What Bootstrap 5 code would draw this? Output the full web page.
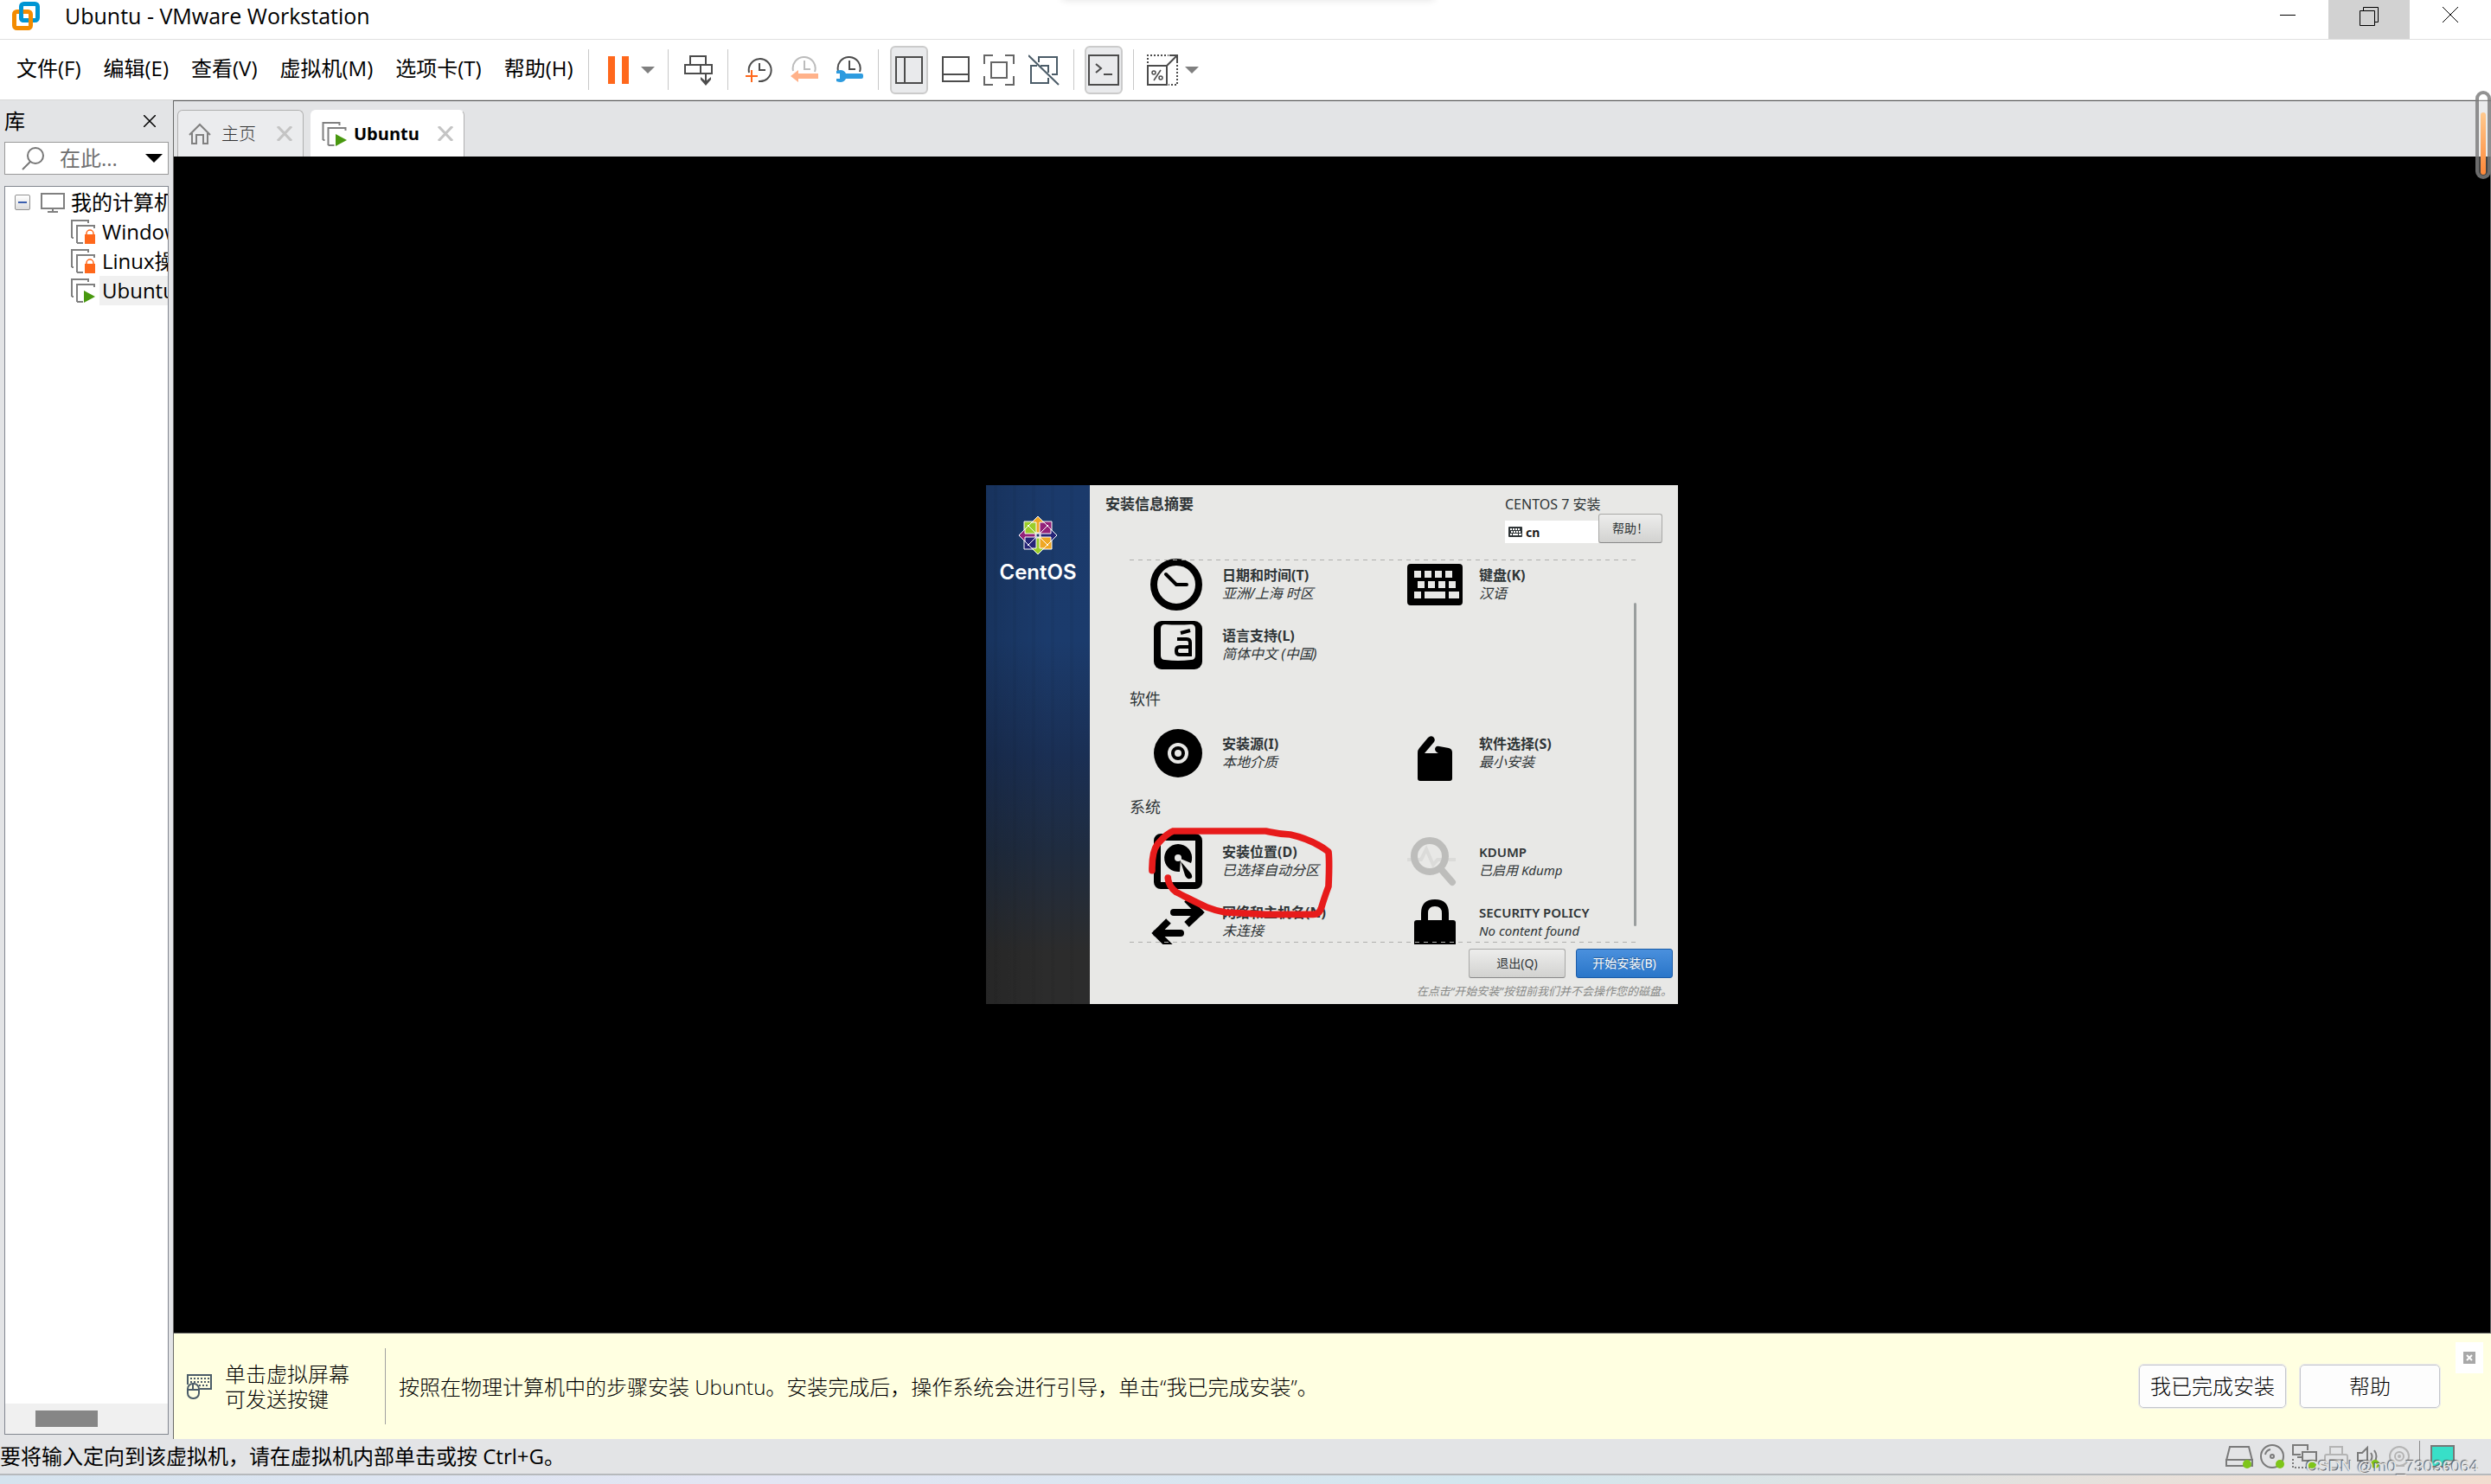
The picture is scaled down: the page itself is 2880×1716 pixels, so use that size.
<!DOCTYPE html>
<html lang="zh-CN">
<head>
<meta charset="utf-8">
<meta name="viewport" content="width=device-width, initial-scale=1">
<title>Ubuntu - VMware Workstation</title>
<link rel="stylesheet" href="https://cdn.jsdelivr.net/npm/bootstrap@5.3.0/dist/css/bootstrap.min.css">
<style>
:root{--ui:"Open Sans","Noto Sans CJK SC",sans-serif;--chrome:#e3e4e6}
body{font-family:var(--ui);font-size:24px;line-height:34px;color:#000;background:#fff}
button{font-family:inherit;color:inherit}
svg{display:block;flex:none}
.plain{border:0;background:none;padding:0;line-height:inherit}
.titlebar{height:45px;padding-left:14px}
.titlebar h1{font-size:25px;line-height:36px;font-weight:400}
.app-logo{margin-top:2px}
.wbtn{width:94px;height:45px;display:flex;justify-content:center;padding-top:8px}
.wbtn.on{background:#d2d2d2}
.notch{left:50%;top:-8px;width:430px;height:6px;margin-left:-212px;box-shadow:0 2px 8px #0002}
.menubar{height:71px;border-top:1px solid #e0e0e0;border-bottom:1px solid #d8d8d8;padding-left:19px;color:#000}
.menus{gap:26px;margin-right:17px;padding-bottom:3px}
.vsep{width:1px;height:47px;background:#c8c8c8;flex:none}
.status .vsep{height:36px;background:#8a8a8a}
.tbtn{height:56px;display:flex;align-items:center;justify-content:center}
.tbtn.on{background:#e9eaec;border:2px solid #cbcbcb;border-radius:6px;width:44px}
.g-power{padding:0 15px 0 22px;gap:14px}
.g-send{padding:0 17px 0 18px}
.g-snap{padding:0 17px 0 20px;gap:20px}
.g-view{padding:0 16px 0 13px;gap:16px}
.g-con{padding:0 12px}
.g-fit{padding-left:15px;gap:8px}
.lib{width:200px;background:var(--chrome);padding:0 5px}
.lib-head{height:48px;padding-right:15px}
.find{height:38px;border:1px solid #999;background:#fff;padding:0 7px 0 19px;gap:17px}
.find input{border:0;outline:0;padding:0;width:82px;color:#666;background:none;line-height:34px}
.find input::placeholder{color:#707070;opacity:1}
.tree{border:1px solid #828790;background:#fff;margin-top:13px;margin-bottom:5px;padding-top:1px;overflow:hidden}
.tree-row{height:34px;white-space:nowrap;padding-left:76px;gap:5px}
.tree-row.root{padding-left:11px;gap:12px}
.tree-row.root span{margin-left:-8px}
.tree-row span{padding-left:3px;flex-grow:1;line-height:34px}
.tree-row.sel span{background:#f0f0f0}
.expander{width:18px;height:18px;flex:none;border:1px solid #919191;border-radius:2px;background:linear-gradient(#fff,#ddd)}
.expander i{width:10px;height:2px;background:#3b5fae}
.hbar{height:35px;background:#f0f0f0;padding:8px 0 0 35px}
.hbar i{display:block;width:72px;height:19px;background:#868686}
.stage{border-left:1px solid #6a6a6a;border-top:1px solid #5a5a5a;min-width:0}
.tabstrip{height:64px;background:var(--chrome);padding:10px 0 0 4px;gap:8px}
.vtab{height:54px;border:1px solid #b0b0b0;border-bottom:0;border-radius:6px 6px 0 0;background:#ebecee;padding:0 12px 0 12px}
.vtab.live{background:#fff;border-color:#fff #b0b0b0 #fff #fff}
.vtab .cap{font-size:20px;margin:0 24px 0 12px;font-weight:300;color:#333}
.vtab.live .cap{margin:0 21px 0 8px;font-weight:700;color:#000}
.screen{background:#000;border-right:1px solid #6a6a6a}
.hint{height:123px;background:#ffffe1;border-top:1px solid #666;padding:0 9px 0 15px;font-weight:300}
.hint p{line-height:29px}
.hint .say{margin-left:15px}
.hint .bar{width:1px;height:88px;background:#a0a0a0;margin:0 15px 0 41px}
.hbtn{height:50px;border:1px solid #c4c6cc;outline:1px solid #ececec;border-radius:5px;background:#fdfdfd;font-weight:300;padding:0 12px}
.hbtn.wide{width:162px}
.xbox{width:32px;height:36px;background:#fff;border:0;padding:0;margin:10px 0 0 18px}
.status{height:42px;background:var(--chrome);border-bottom:2px solid #b6b9bc;padding-right:41px}
.status .tray{gap:8px}
.desk{height:10px;background:linear-gradient(90deg,#d5e3ee,#e3e5f3 30%,#d2e6ee 60%,#f2ddd0)}
.stamp{right:14px;bottom:9px;font-size:19px;line-height:22px;font-family:"Liberation Sans",sans-serif;color:#e8e8e8;text-shadow:-1px -1px 1px #555}
.pill{right:0;top:105px;width:18px;height:102px;border:4px solid #777c;border-radius:9px;background:#fff4;padding:21px 2px 1px}
.pill i{display:block;height:72px;border-radius:3px;background:linear-gradient(#ffc98e,#ff8838)}
/* installer */
.inst{width:800px;height:600px;background:#e8e8e6;color:#2e3436;font-family:"Noto Sans","Noto Sans CJK SC",sans-serif;font-size:16px;line-height:21px}
.inst-side{width:120px;background:repeating-linear-gradient(90deg,#0000 0 9px,#0000000a 9px 13px,#0000 13px 22px),linear-gradient(90deg,#0002,#0000 60%),linear-gradient(#1b3a6b,#1b3b6c 30%,#1a2f54 52%,#1f2c40 70%,#2c2c2c 90%);padding-top:35px;color:#fff}
.logo-word{font:600 24px/30px Inter,sans-serif;margin-top:5px}
.inst-top{height:85px;padding:11px 18px 0 18px}
.inst-top h2{font-size:17px;line-height:22px;font-weight:700;margin:0}
.inst-top .rel{line-height:22px}
.kb{width:108px;height:26px;background:#fff;border:0;padding:0 4px;gap:4px;font-size:14px;font-weight:700;color:#1c1c1c}
.gbtn{height:34px;border:1px solid #a8a8a6;border-bottom-color:#888;border-radius:3px;background:linear-gradient(#ededec,#d2d2d0);font-size:14px;line-height:20px;padding:0;color:#2e3436}
.gbtn.w1{width:74px}.gbtn.w2{width:112px}
.gbtn.go{background:linear-gradient(#4a90dd,#2a76c9);border-color:#1b5ba6;color:#fff;text-shadow:0 -1px 1px #0005}
.hub{width:586px;height:446px;margin-left:46px;overflow:hidden}
.hub::before,.hub::after{content:"";position:absolute;left:0;right:0;height:1px;background:repeating-linear-gradient(90deg,#b0b0ae 0 5px,#0000 5px 10px)}
.hub::before{top:1px}.hub::after{bottom:2px}
.hub-list{margin-top:-5px}
.hub h3{height:55px;font-size:18px;line-height:55px;font-weight:400;margin:0}
.spoke{width:297px;height:70px;flex:none;text-align:left;color:#2e3436}
.spoke .pic{width:107px;display:flex;justify-content:center}
.spoke .pic svg{margin-left:5px;overflow:visible}
.spoke b,.spoke em{display:block;line-height:21px}
.spoke b{font-weight:700}
.spoke .lat{font-weight:600;font-size:15px}
.spoke em.lat{font-weight:400}
.thumb{right:0;top:51px;width:3px;height:374px;border-radius:2px;background:#9a9e9e}
.inst-foot{padding:5px 6px 0 0}
.inst-foot .acts{gap:12px}
.inst-foot p{font-size:13px;line-height:20px;font-style:italic;color:#888a88;margin:5px 1px 0 0}
</style>
</head>
<body class="min-vh-100 d-flex flex-column position-relative overflow-hidden">
<svg width="0" height="0" class="position-absolute" aria-hidden="true">
<defs>
<symbol id="vm" viewBox="0 0 28 28"><path d="M1 21V1h19v3M7 27V7h20v3M1 21h2M7 27h7" fill="none" stroke="#808080" stroke-width="2"/></symbol>
<symbol id="kbd" viewBox="0 0 64 48"><path fill-rule="evenodd" d="M4 0h56a4 4 0 0 1 4 4v40a4 4 0 0 1-4 4H4a4 4 0 0 1-4-4V4a4 4 0 0 1 4-4zM8 8v8h8V8zm12 0v8h8V8zm12 0v8h8V8zm12 0v8h8V8zM12 20v8h8v-8zm12 0v8h8v-8zm12 0v8h8v-8zm12 0v8h8v-8zM8 32v8h8v-8zm12 0v8h24v-8zm28 0v8h12v-8z"/></symbol>
</defs>
</svg>

<header class="titlebar d-flex">
  <svg class="app-logo" width="33" height="33" viewBox="0 0 33 33"><rect x="10.500" y="2.500" width="19" height="19" rx="3" fill="none" stroke="#0095d3" stroke-width="5"/><rect x="2.500" y="11.500" width="19" height="19" rx="3" fill="none" stroke="#f38b00" stroke-width="5"/><path d="M10.500 9v10q0 2.500 2.500 2.500h5" fill="none" stroke="#0095d3" stroke-width="4.500"/></svg>
  <h1 class="mb-0 ms-4 ps-1">Ubuntu - VMware Workstation</h1>
  <div class="d-flex ms-auto">
    <button class="plain wbtn" aria-label="最小化"><svg width="18" height="18"><path d="M0 9.500h18" stroke="#000"/></svg></button>
    <button class="plain wbtn on" aria-label="还原"><svg width="22" height="22"><path d="M4.500 4V.5h17v17H18M.5 4.500h17v17H.5z" fill="none" stroke="#000"/></svg></button>
    <button class="plain wbtn" aria-label="关闭"><svg width="18" height="18"><path d="M0 0l18 18M18 0L0 18" stroke="#000"/></svg></button>
  </div>
</header>
<div class="notch position-absolute"></div>

<nav class="menubar d-flex align-items-center">
  <div class="menus d-flex">
    <button class="plain">文件(F)</button><button class="plain">编辑(E)</button><button class="plain">查看(V)</button><button class="plain">虚拟机(M)</button><button class="plain">选项卡(T)</button><button class="plain">帮助(H)</button>
  </div>
  <div class="vsep"></div>
  <div class="d-flex g-power">
    <button class="plain tbtn" aria-label="挂起"><svg width="24" height="32"><path d="M0 0h8v32H0zM16 0h8v32h-8z" fill="#ff681c"/></svg></button>
    <button class="plain tbtn" aria-label="电源菜单"><svg width="16" height="8"><path d="M0 0h16l-8 8z" fill="#808080"/></svg></button>
  </div>
  <div class="vsep"></div>
  <div class="d-flex g-send">
    <button class="plain tbtn" aria-label="发送按键"><svg width="33" height="36" fill="none" stroke="#4c4c4c" stroke-width="2"><path d="M7 12V2h18v10M1 12h31v10H1zM19 12v10M25 22v11"/><path d="M19 26l6 5 6-5v3l-6 7-6-7z" fill="#4c4c4c" stroke="none"/></svg></button>
  </div>
  <div class="vsep"></div>
  <div class="d-flex g-snap">
    <button class="plain tbtn" aria-label="快照"><svg width="32" height="32" fill="none" stroke="#4c4c4c" stroke-width="2"><path d="M4 19A13 13 0 1 1 15 29M16 8v8h7"/><path d="M0 23h14M7 16v14" stroke="#ff681c"/></svg></button>
    <button class="plain tbtn" aria-label="恢复快照"><svg width="32" height="32" fill="none" stroke="#bcbcbc" stroke-width="2"><path d="M3 17A13 13 0 1 1 28 18M16 5v10h7"/><path d="M0 23l9-7v4h23v6H9v4z" fill="#ffb28a" stroke="none"/></svg></button>
    <button class="plain tbtn" aria-label="快照管理器"><svg width="32" height="32" fill="none" stroke="#4c4c4c" stroke-width="2"><path d="M3 17A13 13 0 1 1 28 18M16 5v10h7"/><path d="M1 17q8-3 11 3h18a2 2 0 0 1 2 2v2a2 2 0 0 1-2 2H12q-3 6-11 3v-3h4v-6H1z" fill="#2d9bdf" stroke="none"/></svg></button>
  </div>
  <div class="vsep"></div>
  <div class="d-flex g-view">
    <button class="plain tbtn on" aria-label="库"><svg width="32" height="32" fill="none" stroke="#4c4c4c" stroke-width="2"><path d="M1 1h30v30H1zM11 1v30"/></svg></button>
    <button class="plain tbtn" aria-label="缩略图栏"><svg width="32" height="32" fill="none" stroke="#4c4c4c" stroke-width="2"><path d="M1 1h30v28H1zM1 21h30"/></svg></button>
    <button class="plain tbtn" aria-label="全屏"><svg width="36" height="36" fill="none" stroke="#666" stroke-width="2"><path d="M1 11V1h10M25 1h10v10M35 25v10H25M11 35H1V25M9 9h18v18H9z"/></svg></button>
    <button class="plain tbtn" aria-label="Unity"><svg width="36" height="36" fill="none" stroke="#4b5c68" stroke-width="2"><path d="M12 9V3h21v20h-6M10 13H3v20h20v-6M14 13h9v8M0 1l35 34"/></svg></button>
  </div>
  <div class="vsep"></div>
  <div class="d-flex g-con">
    <button class="plain tbtn on" aria-label="控制台"><svg width="36" height="36" fill="none" stroke="#4c4c4c" stroke-width="2"><path d="M1 1h34v34H1zM9 11l6 5-6 5M18 23h10"/></svg></button>
  </div>
  <div class="vsep"></div>
  <div class="d-flex g-fit">
    <button class="plain tbtn" aria-label="拉伸"><svg width="36" height="36" fill="none" stroke="#4c4c4c" stroke-width="2"><path d="M1 13h22v22H1zM23 13L34 2M26 1h9v9"/><path d="M1 10V1h24M35 12v23H25" stroke-dasharray="2 2"/><path d="M8 30l8-12" stroke-width="1.500"/><circle cx="8" cy="21" r="2" stroke-width="1.500"/><circle cx="16" cy="27" r="2" stroke-width="1.500"/></svg></button>
    <button class="plain tbtn" aria-label="拉伸菜单"><svg width="16" height="8"><path d="M0 0h16l-8 8z" fill="#808080"/></svg></button>
  </div>
</nav>

<main class="d-flex flex-grow-1">
  <aside class="lib d-flex flex-column flex-shrink-0">
    <div class="lib-head d-flex align-items-center justify-content-between"><span>库</span><button class="plain" aria-label="关闭库"><svg width="14" height="14"><path d="M0 0l14 14M14 0L0 14" stroke="#000" stroke-width="1.500"/></svg></button></div>
    <div class="find d-flex align-items-center">
      <svg width="27" height="27" fill="none" stroke="#777" stroke-width="2"><circle cx="16" cy="10" r="9"/><path d="M10 17l-9 9"/></svg>
      <input type="text" placeholder="在此..." aria-label="在此处键入内容进行搜索">
      <button class="plain ms-auto" aria-label="搜索选项"><svg width="20" height="10"><path d="M0 0h20L10 10z"/></svg></button>
    </div>
    <div class="tree d-flex flex-column flex-grow-1">
      <div class="tree-row root d-flex align-items-center"><button class="plain expander d-flex align-items-center justify-content-center" aria-label="折叠"><i></i></button><svg width="28" height="23" fill="none" stroke="#808080" stroke-width="2"><path d="M1 1h26v17H1zM14 18v3M8 22h12"/></svg><span>我的计算机</span></div>
      <div class="tree-row d-flex align-items-center"><svg width="28" height="28"><use href="#vm"/><path d="M16 17h12v11H16z" fill="#ff681c"/><path d="M18 18v-2a4 4 0 0 1 8 0v2" fill="none" stroke="#ff681c" stroke-width="1.500"/></svg><span>Windows</span></div>
      <div class="tree-row d-flex align-items-center"><svg width="28" height="28"><use href="#vm"/><path d="M16 17h12v11H16z" fill="#ff681c"/><path d="M18 18v-2a4 4 0 0 1 8 0v2" fill="none" stroke="#ff681c" stroke-width="1.500"/></svg><span>Linux操作</span></div>
      <div class="tree-row sel d-flex align-items-center"><svg width="28" height="28"><use href="#vm"/><path d="M15 14l13 7-13 7z" fill="#48980f"/></svg><span>Ubuntu</span></div>
      <div class="hbar mt-auto"><i></i></div>
    </div>
  </aside>

  <section class="stage d-flex flex-column flex-grow-1">
    <div class="tabstrip d-flex">
      <div class="vtab d-flex align-items-center"><svg width="26" height="25" fill="none" stroke="#808080" stroke-width="2"><path d="M1 14L13 2l12 12M4 12v12h5V14h8v10h5V12"/></svg><span class="cap">主页</span><button class="plain" aria-label="关闭主页"><svg width="18" height="17"><path d="M1 0l16 17M17 0L1 17" stroke="#c4c4c4" stroke-width="3"/></svg></button></div>
      <div class="vtab live d-flex align-items-center"><svg width="29" height="28"><use href="#vm"/><path d="M16 14l13 7-13 7z" fill="#48980f"/></svg><span class="cap">Ubuntu</span><button class="plain" aria-label="关闭 Ubuntu"><svg width="18" height="17"><path d="M1 0l16 17M17 0L1 17" stroke="#c4c4c4" stroke-width="3"/></svg></button></div>
    </div>

    <div class="screen d-flex flex-grow-1 align-items-center justify-content-center">
      <div class="inst d-flex position-relative">
        <div class="inst-side d-flex flex-column align-items-center">
          <svg width="46" height="46" viewBox="-23 -23 46 46" stroke="#fff">
            <path d="M-16-16H0V0h-16z" fill="#9ccd2a"/><path d="M0-16h16V0H0z" fill="#932279"/><path d="M0 0h16v16H0z" fill="#efa724"/><path d="M-16 0H0v16h-16z" fill="#262577"/>
            <path d="M0-22l7 7h-5V-3h-4v-12h-5z" fill="#efa724"/><path d="M22 0l-7 7V2H3v-4h12v-5z" fill="#262577"/><path d="M0 22l-7-7h5V3h4v12h5z" fill="#9ccd2a"/><path d="M-22 0l7-7v5H-3v4h-12v5z" fill="#932279"/>
            <path d="M0-22L22 0 0 22-22 0zM-12-12L12 12M12-12L-12 12" fill="none"/><path d="M-2-2h4v4h-4z" fill="#1b3a6b"/>
          </svg>
          <div class="logo-word">CentOS</div>
        </div>
        <div class="flex-grow-1">
          <div class="inst-top d-flex justify-content-between">
            <h2>安装信息摘要</h2>
            <div>
              <div class="rel">CENTOS 7 安装</div>
              <div class="d-flex align-items-end">
                <button class="kb d-flex align-items-center"><svg width="16" height="12" fill="#2e3436"><use href="#kbd"/></svg>cn</button>
                <button class="gbtn w1">帮助！</button>
              </div>
            </div>
          </div>
          <div class="hub position-relative">
            <div class="hub-list">
              <div class="d-flex">
                <button class="plain spoke d-flex align-items-center"><span class="pic"><svg width="64" height="60" fill="none" stroke="#000"><circle cx="30" cy="30" r="26" stroke-width="8"/><path d="M18 18l12 12h12" stroke-width="4" stroke-linecap="round"/></svg></span><span><b>日期和时间(T)</b><em>亚洲/上海 时区</em></span></button>
                <button class="plain spoke d-flex align-items-center"><span class="pic"><svg width="64" height="48"><use href="#kbd"/></svg></span><span><b>键盘(K)</b><em>汉语</em></span></button>
              </div>
              <div class="d-flex">
                <button class="plain spoke d-flex align-items-center"><span class="pic"><svg width="56" height="56"><rect width="56" height="56" rx="9"/><path d="M13 4q15 1 30 0 5 0 5 5v31q0 5-5 5-15 2-30 0-5 0-5-5V9q0-5 5-5z" fill="#e8e8e6"/><path d="M31 14l11-3M27 21h11q4 0 4 4v14H30q-4 0-4-4v-1q0-4 4-4h12" fill="none" stroke="#000" stroke-width="4"/></svg></span><span><b>语言支持(L)</b><em>简体中文 (中国)</em></span></button>
              </div>
              <h3>软件</h3>
              <div class="d-flex">
                <button class="plain spoke d-flex align-items-center"><span class="pic"><svg width="56" height="56"><circle cx="28" cy="28" r="28"/><circle cx="28" cy="28" r="12" fill="#e8e8e6"/><circle cx="28" cy="28" r="6" fill="none" stroke="#000" stroke-width="4"/></svg></span><span><b>安装源(I)</b><em>本地介质</em></span></button>
                <button class="plain spoke d-flex align-items-center"><span class="pic"><svg width="40" height="64" viewBox="0 -12 40 64"><path d="M0 20q0-4 2-6L12 2q3-3 6-1 3 3 1 6L8 20h16q-4-2-4-5 1-4 5-3l11 2q4 1 4 5v30q0 3-3 3H3q-3 0-3-3z"/></svg></span><span><b>软件选择(S)</b><em>最小安装</em></span></button>
              </div>
              <h3>系统</h3>
              <div class="d-flex">
                <button class="plain spoke d-flex align-items-center"><span class="pic"><svg width="56" height="64"><rect x="4" y="4" width="48" height="56" rx="4" fill="none" stroke="#000" stroke-width="8"/><path d="M30 44A16 16 0 1 1 43 34L31 29z"/><circle cx="28" cy="28" r="4" fill="#e8e8e6"/><path d="M31 32l12 14q3 5-1 6-4 1-6-4z"/></svg></span><span><b>安装位置(D)</b><em>已选择自动分区</em></span></button>
                <button class="plain spoke d-flex align-items-center"><span class="pic"><svg width="56" height="56" fill="none" stroke="#bdbdbb"><path d="M-4 26H12l6-12 8 18 5-6h21" stroke="#dbdbd9" stroke-width="4"/><circle cx="22" cy="22" r="18" stroke-width="8"/><path d="M35 37l13 15" stroke-width="8" stroke-linecap="round"/></svg></span><span><b class="lat">KDUMP</b><em class="lat">已启用 Kdump</em></span></button>
              </div>
              <div class="d-flex">
                <button class="plain spoke d-flex align-items-center"><span class="pic"><svg width="62" height="56" fill="none" stroke="#000" stroke-width="8"><path d="M26 17h30M34 41H6" stroke-linecap="round"/><path d="M41 2l15 15-15 14M20 27L6 41l16 16"/></svg></span><span><b>网络和主机名(N)</b><em>未连接</em></span></button>
                <button class="plain spoke d-flex align-items-center"><span class="pic"><svg width="48" height="56"><path d="M12 28V18q0-12 12-12t12 12v10" fill="none" stroke="#000" stroke-width="8"/><rect y="26" width="48" height="40" rx="3"/></svg></span><span><b class="lat">SECURITY POLICY</b><em class="lat">No content found</em></span></button>
              </div>
            </div>
            <div class="thumb position-absolute"></div>
          </div>
          <div class="inst-foot text-end">
            <div class="acts d-flex justify-content-end"><button class="gbtn w2">退出(Q)</button><button class="gbtn go w2">开始安装(B)</button></div>
            <p>在点击“开始安装”按钮前我们并不会操作您的磁盘。</p>
          </div>
        </div>
        <svg class="position-absolute top-0 start-0 pe-none" width="800" height="600" fill="none" stroke="#e71b1b" stroke-width="23" stroke-linecap="round" stroke-linejoin="round"><path transform="translate(-10 289) scale(.3333)" d="M606 470C605 420 612 395 625 378C645 355 660 340 680 333H1000C1020 337 1040 343 1085 345C1130 355 1180 375 1218 405C1222 440 1220 480 1218 525C1205 560 1200 575 1193 600C1188 615 1180 622 1165 622H1000L860 615C800 605 770 585 690 545C670 530 662 515 661 495"/></svg>
      </div>
    </div>

    <div class="hint d-flex align-items-center">
      <svg width="29" height="29" fill="none" stroke="#4b5c68" stroke-width="2"><path d="M1 12V1h27v16H15"/><path d="M4 5h22M4 9h22M14 13h12" stroke-dasharray="2 2"/><rect x="1" y="11" width="13" height="17" rx="6"/><path d="M1 18h13M7 11v7"/></svg>
      <p class="say mb-0">单击虚拟屏幕<br>可发送按键</p>
      <div class="bar"></div>
      <p class="mb-0">按照在物理计算机中的步骤安装 Ubuntu。安装完成后，操作系统会进行引导，单击“我已完成安装”。</p>
      <div class="d-flex ms-auto gap-3"><button class="hbtn">我已完成安装</button><button class="hbtn wide">帮助</button></div>
      <button class="xbox align-self-start d-flex align-items-center justify-content-center" aria-label="关闭提示"><svg width="14" height="14"><rect width="14" height="14" fill="#a8a8a8"/><path d="M4 4l6 6M10 4l-6 6" stroke="#fff" stroke-width="2"/></svg></button>
    </div>
  </section>
</main>

<footer class="status d-flex align-items-center justify-content-between">
  <span>要将输入定向到该虚拟机，请在虚拟机内部单击或按 Ctrl+G。</span>
  <div class="tray d-flex align-items-center">
    <svg width="32" height="28" fill="none" stroke="#7a7a7a" stroke-width="2"><path d="M1 19L5 3h22l4 16M1 18h30v7H1z"/><circle cx="25" cy="23" r="5" fill="#7ec51a" stroke="none"/></svg>
    <svg width="29" height="28" fill="none" stroke="#7a7a7a" stroke-width="2"><circle cx="14" cy="14" r="13"/><circle cx="14" cy="14" r="2"/><path d="M6 12q1-5 6-6"/><circle cx="23" cy="23" r="5" fill="#7ec51a" stroke="none"/></svg>
    <svg width="29" height="28" fill="none" stroke="#7a7a7a" stroke-width="2"><path d="M10 12H1V1h17v6M12 9h16v10H12zM6 15h6"/><path d="M1 17v10h22" stroke-dasharray="2 2"/><circle cx="23" cy="23" r="5" fill="#7ec51a" stroke="none"/></svg>
    <svg width="29" height="28" fill="none" stroke="#b4b4b4" stroke-width="2"><path d="M7 12V3h14v9M5 22H1v-8q0-2 2-2h22q2 0 2 2v8h-4M7 18h14v9H7z"/></svg>
    <svg width="29" height="28" fill="none" stroke="#7a7a7a" stroke-width="2"><path d="M2 10h5l6-6v21l-6-6H2zM17 10q3 4 0 9M21 7q5 7 0 14"/><circle cx="22" cy="23" r="5" fill="#7ec51a" stroke="none"/></svg>
    <svg width="28" height="28" fill="none" stroke="#b4b4b4" stroke-width="2"><circle cx="13" cy="14" r="11"/><circle cx="13" cy="14" r="5"/><circle cx="13" cy="14" r="1"/><path d="M7 25h12"/></svg>
    <div class="vsep"></div>
    <svg width="29" height="28" class="ms-1"><path d="M1 2h26v17l-8 7H1z" fill="#38dfc8" stroke="#777" stroke-width="2"/><path d="M27 19h-8v7z" fill="#eee" stroke="#777"/></svg>
  </div>
</footer>
<div class="desk"></div>
<div class="stamp position-absolute">CSDN @m0_73036064</div>
<div class="pill position-absolute"><i></i></div>
<script src="https://cdn.jsdelivr.net/npm/bootstrap@5.3.0/dist/js/bootstrap.bundle.min.js"></script>
</body>
</html>
